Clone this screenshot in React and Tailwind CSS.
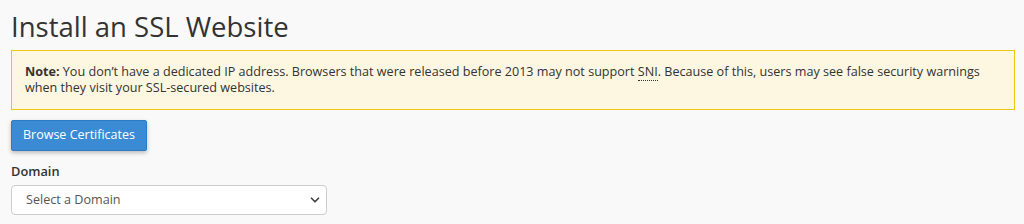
import React from "react";
import { ChevronDown } from "lucide-react";

const App = () => {
  return (
    <div
      className="min-h-[224px] bg-[#f9f9f9] px-[11px] pt-[8px] text-[#333]"
      style={{ fontFamily: '"Open Sans", sans-serif' }}
    >
      {/* Page title */}
      <h1 className="text-[27.5px] leading-[37px] font-normal text-[#333]">
        Install an SSL Website
      </h1>

      {/* SNI warning */}
      <div className="mt-[5px] w-[1004px] border border-[#f1c40f] bg-[#fdf7e1] px-[13px] pt-[13px] pb-[13px] text-[12.6px] leading-[16px]">
        <strong className="font-bold">Note:</strong> You don’t have a dedicated IP address. Browsers that
        were released before 2013 may not support{" "}
        <abbr
          title="Server Name Indication"
          className="no-underline border-b border-dotted border-[#333]"
        >
          SNI
        </abbr>
        . Because of this, users may see false security warnings when they visit your SSL-secured
        websites.
      </div>

      {/* Browse button */}
      <button className="mt-[10px] h-[31px] w-[136px] rounded-[2px] border border-[#2f7bc1] bg-[#3a8bd4] text-[12.5px] text-white shadow-[0_2px_4px_rgba(0,0,0,0.25)]">
        Browse Certificates
      </button>

      {/* Domain select */}
      <div className="mt-[11px]">
        <label className="block text-[12.8px] font-semibold leading-[18px] text-[#333]">Domain</label>
        <div className="relative mt-[5px] w-[316px]">
          <select className="h-[30px] w-full appearance-none rounded-[4px] border border-[#ccc] bg-white pl-[14px] text-[12.6px] text-[#555] outline-none">
            <option>Select a Domain</option>
          </select>
          <ChevronDown
            className="pointer-events-none absolute right-[5px] top-[8px] h-[14px] w-[14px] text-[#444]"
            strokeWidth={3}
          />
        </div>
      </div>
    </div>
  );
};

export default App;
